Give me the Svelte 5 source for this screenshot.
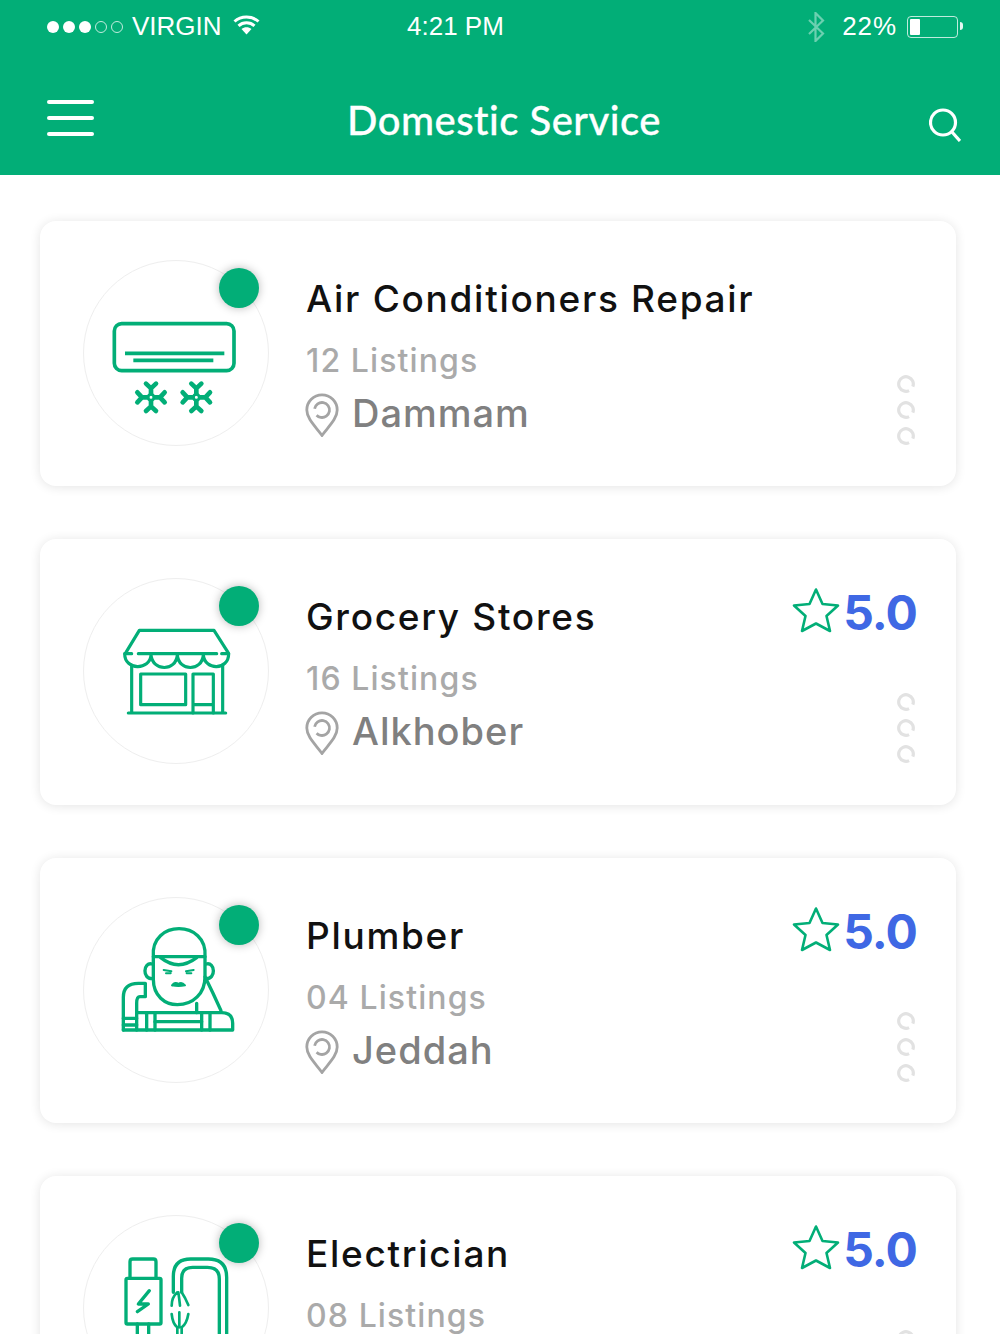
<script>
  const services = [
    { title: 'Air Conditioners Repair', listings: '12 Listings', city: 'Dammam', rating: null, icon: 'ac' },
    { title: 'Grocery Stores', listings: '16 Listings', city: 'Alkhober', rating: '5.0', icon: 'store' },
    { title: 'Plumber', listings: '04 Listings', city: 'Jeddah', rating: '5.0', icon: 'plumber' },
    { title: 'Electrician', listings: '08 Listings', city: 'Riyadh', rating: '5.0', icon: 'cable' }
  ];
  const flakes = [243, 379];
</script>

{#snippet flake(cx)}
  <g transform="translate({cx} 442)">
    <circle r="9" stroke-width="9" />
    {#each [0, 90, 180, 270] as a}
      <g transform="rotate({a})">
        <path d="M0 -12 V-27 M-15 -41 L0 -27 L15 -41" stroke-width="14" />
      </g>
    {/each}
  </g>
{/snippet}

{#snippet serviceIcon(name)}
  {#if name === 'ac'}
    <svg class="art" viewBox="36 30 558 558" stroke-width="11">
      <rect x="133" y="221" width="359" height="141" rx="22" />
      <path d="M165 310 H463 M190 331 H430" stroke-width="11" stroke-linecap="butt" />
      {#each flakes as f}{@render flake(f)}{/each}
    </svg>
  {:else if name === 'store'}
    <svg class="art" viewBox="36 27 558 558" stroke-width="9.500">
      <path d="M168 250 L208 184 H432 L474 250" />
      <path d="M205 254 H440 M165 254 H185 M455 254 H476" />
      <path d="M164 254 C164 305 240 305 243 258 C248 308 318 308 322 258 C326 308 396 308 400 258 C404 305 476 305 476 254" />
      <path d="M185 288 V432 M458 288 V432 M175 432 H467" />
      <rect x="212" y="315" width="135" height="92" />
      <path d="M369 432 V315 H430 V432 M369 407 H430" />
    </svg>
  {:else if name === 'plumber'}
    <svg class="art" viewBox="36 21 558 558" stroke-width="10">
      <path d="M250 200 C240 88 414 88 405 200 Z" />
      <path d="M272 203 Q325 245 380 203" />
      <path d="M250 200 V268 C250 318 285 344 322 344 C370 344 405 310 405 260 V200" />
      <path d="M246 222 C220 215 215 268 248 266 M409 222 C435 215 440 268 407 266" />
      <path d="M281 240 L304 244 M288 250 L302 250 M371 240 L348 244 M364 250 L350 250" stroke-width="6" />
      <path d="M306 286 Q316 274 325 282 Q335 274 345 286 Q325 290 306 286" fill="#02ae77" stroke-width="6" />
      <path d="M160 420 V322 Q160 280 205 280 H226 V320 H210 Q200 320 200 340 V420" />
      <path d="M160 420 H488 V400 Q488 368 455 368 H226" />
      <path d="M205 368 H226 M230 368 V420 M255 368 V420 M395 368 V420 M420 368 V420" />
      <path d="M255 395 H395 M160 385 H200 M160 405 H200" />
      <path d="M405 260 Q430 310 453 362 M380 340 V368" />
    </svg>
  {:else}
    <svg class="art" viewBox="36 48 558 558" stroke-width="10">
      <path d="M180 238 V188 Q180 180 188 180 H250 Q258 180 258 188 V238" />
      <rect x="168" y="238" width="105" height="137" rx="4" />
      <path d="M238 275 L205 315 H235 L202 338" />
      <path d="M202 375 V410 H236 V375" />
      <path d="M310 280 V232 Q310 180 362 180 H415 Q470 180 470 235 V620" />
      <path d="M335 280 V238 Q335 205 368 205 H412 Q448 205 448 240 V620" />
      <path d="M322 280 Q305 295 305 320 M325 280 Q328 300 330 320 M335 280 Q345 295 355 318" stroke-width="8" />
      <path d="M305 345 Q308 375 322 385 M328 340 V385 M355 345 Q350 375 335 385 M322 385 V620 M335 385 V620" stroke-width="8" />
    </svg>
  {/if}
{/snippet}

<div class="screen">
  <header class="top">
    <div class="status">
      <div class="left">
        <span class="signal"><i></i><i></i><i></i><i class="off"></i><i class="off"></i></span>
        <span>VIRGIN</span>
        <svg class="wifi" viewBox="0 0 27 20">
          <path d="M1.500 6.500 C8 0.500 19 0.500 25.500 6.500 M5.500 10.800 C10 6.800 17 6.800 21.500 10.800" />
          <path d="M8.500 14 L13.500 19.500 L18.500 14 C15.500 11.800 11.500 11.800 8.500 14 Z" class="wifi-fill" />
        </svg>
      </div>
      <div class="time">4:21 PM</div>
      <div class="right">
        <svg class="bt" viewBox="0 0 18 30">
          <path d="M2 8 L16 21.500 L8.500 29 V1 L16 8.500 L2 22" />
        </svg>
        <span class="pct">22%</span>
        <span class="battery"><b></b></span>
      </div>
    </div>
    <nav class="bar">
      <div class="burger"><i></i><i></i><i></i></div>
      <h1>Domestic Service</h1>
      <svg class="search" viewBox="0 0 32 34">
        <circle cx="14" cy="14.500" r="12.500" />
        <path d="M23 24 L31 33" />
      </svg>
    </nav>
  </header>

  <main class="list">
    {#each services as s}
      <article class="card">
        <div class="avatar">
          {@render serviceIcon(s.icon)}
          <span class="dot"></span>
        </div>
        <div class="info">
          <h2>{s.title}</h2>
          <p class="count">{s.listings}</p>
          <p class="city">
            <svg class="pin" viewBox="0 0 34 44">
              <path d="M17 42.500 C11 34 1.800 26 1.800 17 A15.200 15.200 0 0 1 32.200 17 C32.200 26 23 34 17 42.500 Z" />
              <circle cx="17" cy="17" r="7.500" pathLength="100" stroke-dasharray="85 15" transform="rotate(190 17 17)" />
            </svg>
            <span>{s.city}</span>
          </p>
        </div>
        <div class="side">
          {#if s.rating}
            <div class="rating">
              <svg class="star" viewBox="0 0 48 46">
                <path d="M24 2.500 L30.500 17 L46 18.500 L34.500 29 L38 44 L24 36.500 L10 44 L13.500 29 L2 18.500 L17.500 17 Z" />
              </svg>
              <span>{s.rating}</span>
            </div>
          {/if}
          <div class="dots">
            {#each [0, 1, 2] as d}
              <svg viewBox="0 0 18 18"><circle cx="9" cy="9" r="7.300" pathLength="100" stroke-dasharray="88 12" transform="rotate(65 9 9)" /></svg>
            {/each}
          </div>
        </div>
      </article>
    {/each}
  </main>
</div>

<style>
  :global(body) { margin: 0; background: #fff; }
  .screen { width: 1000px; height: 1334px; overflow: hidden; background: #fff; }

  .top { height: 175px; background: #02ae77; color: #fff; }
  .status {
    height: 53px;
    display: grid;
    grid-template-columns: 360px auto 1fr;
    align-items: center;
    padding: 0 38px 0 47px;
    font: 26px "Liberation Sans", sans-serif;
  }
  .left { display: flex; align-items: center; }
  .signal { display: flex; gap: 4px; margin-right: 9px; }
  .signal i { width: 12px; height: 12px; border-radius: 50%; background: #fff; box-sizing: border-box; }
  .signal i.off { background: none; border: 1.500px solid rgba(255,255,255,.75); }
  .wifi { width: 27px; height: 20px; margin-left: 11px; margin-top: -3px; fill: none; stroke: #fff; stroke-width: 3; }
  .wifi-fill { fill: #fff; stroke: none; }
  .right { display: flex; align-items: center; justify-content: flex-end; }
  .bt { width: 18px; height: 30px; margin-right: 17px; fill: none; stroke: rgba(255,255,255,.42); stroke-width: 2.200; }
  .pct { letter-spacing: .9px; }
  .battery {
    position: relative;
    box-sizing: border-box;
    width: 51px; height: 22px;
    margin-left: 10px; margin-right: 4px;
    border: 1.500px solid rgba(255,255,255,.75);
    border-radius: 4px;
    padding: 2px;
    display: block;
  }
  .battery b { display: block; width: 10px; height: 100%; background: #fff; border-radius: 1px; }
  .battery::after {
    content: ""; position: absolute; right: -6px; top: 5px;
    width: 3px; height: 8px; background: rgba(255,255,255,.9); border-radius: 0 3px 3px 0;
  }

  .bar {
    height: 122px;
    box-sizing: border-box;
    padding: 14px 39px 0 47px;
    display: grid;
    grid-template-columns: 1fr auto 1fr;
    align-items: center;
  }
  .bar h1 { margin: 0 0 2px; font: 500 40px Lato, sans-serif; letter-spacing: .5px; -webkit-text-stroke: .3px #fff; }
  .burger { display: flex; flex-direction: column; gap: 12px; width: 47px; margin-top: -6px; }
  .burger i { display: block; height: 4px; background: #fff; border-radius: 2px; }
  .search { width: 32px; height: 34px; justify-self: end; margin-top: 7px; fill: none; stroke: #fff; stroke-width: 3.200; }

  .list { padding: 46px 44px 0 40px; display: flex; flex-direction: column; gap: 53px; }
  .card {
    flex: none;
    height: 265.300px;
    box-sizing: border-box;
    padding: 39px 38px 0 43px;
    background: #fff;
    border-radius: 16px;
    box-shadow: 0 1px 11px rgba(0,0,0,.11);
    display: flex;
    gap: 37px;
  }
  .avatar {
    position: relative;
    flex: none;
    width: 186px; height: 186px;
    border-radius: 50%;
    border: 1px solid #eeeeee;
    box-sizing: border-box;
  }
  .art {
    display: block;
    width: 186px; height: 186px;
    margin: -1px 0 0 -2px;
    overflow: visible;
    fill: none;
    stroke: #02ae77;
    stroke-linecap: round;
    stroke-linejoin: round;
  }
  .dot {
    position: absolute;
    top: 7px; left: 135px;
    width: 40px; height: 40px;
    border-radius: 50%;
    background: #02ae77;
    box-shadow: 0 0 10px rgba(0,0,0,.28);
  }

  .info { flex: 1; min-width: 0; font-family: Inter, sans-serif; padding-top: 15px; }
  h2 { margin: 0; font-size: 37px; line-height: 48px; font-weight: 500; color: #111; letter-spacing: 1.700px; }
  .count { margin: 16px 0 0; font-size: 32px; line-height: 44px; font-weight: 500; color: #aaaaaa; letter-spacing: 1.100px; }
  .city { margin: 4px 0 0; display: flex; align-items: center; gap: 13px; font-size: 38px; line-height: 52px; font-weight: 500; color: #808080; letter-spacing: 1px; }
  .pin { width: 34px; height: 44px; flex: none; margin-top: 4px; margin-left: -1px; fill: none; stroke: #a4a4a4; stroke-width: 2.800; }

  .side { flex: none; width: 125px; height: 186px; position: relative; display: flex; flex-direction: column; align-items: flex-end; }
  .rating { display: flex; align-items: center; gap: 3px; font: 700 48px/56px Inter, sans-serif; letter-spacing: -.9px; color: #3f68e4; margin-top: 7px; margin-right: 1px; }
  .star { width: 48px; height: 46px; margin-bottom: 6px; fill: none; stroke: #02ae77; stroke-width: 2.600; stroke-linejoin: round; }
  .dots { margin-top: auto; margin-right: 3px; display: flex; flex-direction: column; gap: 8px; transform: translateY(-1px); }
  .dots svg { display: block; width: 18px; height: 18px; fill: none; stroke: #e2e2e2; stroke-width: 3.200; }
</style>
